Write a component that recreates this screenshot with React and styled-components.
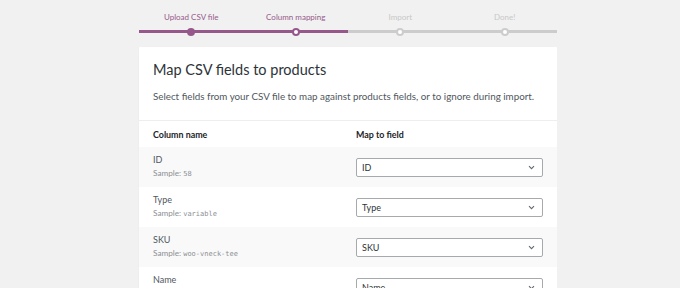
import styled, { createGlobalStyle } from "styled-components";

const GlobalStyle = createGlobalStyle`
  body {
    margin: 0;
    background: #f1f1f1;
    font-family: Lato, "Noto Sans", sans-serif;
    color: #3c434a;
  }
`;

const steps = [
  { label: "Upload CSV file", state: "done" },
  { label: "Column mapping", state: "active" },
  { label: "Import", state: "todo" },
  { label: "Done!", state: "todo" },
];

const rows = [
  { name: "ID", sample: "58", field: "ID" },
  { name: "Type", sample: "variable", field: "Type" },
  { name: "SKU", sample: "woo-vneck-tee", field: "SKU" },
  { name: "Name", sample: "V-Neck T-Shirt", field: "Name" },
];

function Chevron() {
  return (
    <svg width="7" height="5" viewBox="0 0 7 5">
      <path d="M1 1.2l2.5 2.5 2.5-2.5" fill="none" stroke="#646970" strokeWidth="1.1" />
    </svg>
  );
}

export default function App() {
  return (
    <>
      <GlobalStyle />
      <Page>
        <Steps>
          {steps.map((s, i) => (
            <Step key={s.label} $state={s.state} $lit={i < 2}>
              {s.label}
              <Dot $state={s.state} />
            </Step>
          ))}
        </Steps>
        <Card>
          <CardHead>
            <Title>Map CSV fields to products</Title>
            <Intro>
              Select fields from your CSV file to map against products fields,
              or to ignore during import.
            </Intro>
          </CardHead>
          <Table>
            <HeadRow>
              <span>Column name</span>
              <span>Map to field</span>
            </HeadRow>
            {rows.map((r, i) => (
              <Row key={r.name} $striped={i % 2 === 0}>
                <Cell>
                  <Name>{r.name}</Name>
                  <Sample>
                    Sample: <code>{r.sample}</code>
                  </Sample>
                </Cell>
                <Select>
                  {r.field}
                  <Chevron />
                </Select>
              </Row>
            ))}
          </Table>
        </Card>
      </Page>
    </>
  );
}

const Page = styled.div`
  width: 418px;
  padding: 11px 0 0 139px;
  height: 277px;
  overflow: hidden;
`;

const Steps = styled.ol`
  list-style: none;
  margin: 0;
  padding: 0;
  display: grid;
  grid-template-columns: repeat(4, 1fr);
`;

const Step = styled.li`
  position: relative;
  text-align: center;
  font-size: 8px;
  line-height: 12px;
  padding-bottom: 7px;
  color: ${(p) => (p.$state === "todo" ? "#c8c8c8" : "#96588a")};
  border-bottom: 3px solid ${(p) => (p.$lit ? "#96588a" : "#cccccc")};
`;

const Dot = styled.span`
  position: absolute;
  left: 50%;
  bottom: -5.5px;
  width: 8px;
  height: 8px;
  margin-left: -4px;
  box-sizing: border-box;
  border-radius: 50%;
  background: ${(p) => (p.$state === "done" ? "#96588a" : "#fff")};
  border: 2px solid ${(p) => (p.$state === "todo" ? "#cccccc" : "#96588a")};
`;

const Card = styled.div`
  margin-top: 14px;
  background: #fff;
  box-shadow: 0 1px 2px rgba(0, 0, 0, 0.04);
`;

const CardHead = styled.div`
  padding: 13px 14px 17px;
  border-bottom: 1px solid #eeeeee;
`;

const Title = styled.h2`
  margin: 0;
  font-size: 14.5px;
  line-height: 20px;
  font-weight: 400;
  color: #2c3338;
`;

const Intro = styled.p`
  margin: 9px 0 0;
  font-size: 9.8px;
  line-height: 14px;
  color: #50575e;
  white-space: nowrap;
`;

const Table = styled.div`
  display: flex;
  flex-direction: column;
`;

const HeadRow = styled.div`
  display: grid;
  grid-template-columns: 203px 1fr;
  padding: 0 14px;
  height: 26px;
  align-items: center;
  font-size: 8.9px;
  font-weight: 700;
  color: #1d2327;
`;

const Row = styled.div`
  display: grid;
  grid-template-columns: 203px 1fr;
  padding: 0 14px;
  height: 40px;
  align-items: center;
  background: ${(p) => (p.$striped ? "#f9f9f9" : "#fff")};
`;

const Cell = styled.div`
  display: flex;
  flex-direction: column;
  gap: 3px;
`;

const Name = styled.span`
  font-size: 9px;
  line-height: 11px;
  color: #50575e;
`;

const Sample = styled.span`
  font-size: 8.2px;
  line-height: 11px;
  color: #8c8f94;
  code {
    font-family: "DejaVu Sans Mono", "Liberation Mono", monospace;
    font-size: 7px;
  }
`;

const Select = styled.div`
  display: flex;
  justify-content: space-between;
  align-items: center;
  height: 19px;
  box-sizing: border-box;
  padding: 0 7px 0 5px;
  border: 1px solid #a7aaad;
  border-radius: 2px;
  background: #fff;
  font-size: 9px;
  color: #2c3338;
`;
